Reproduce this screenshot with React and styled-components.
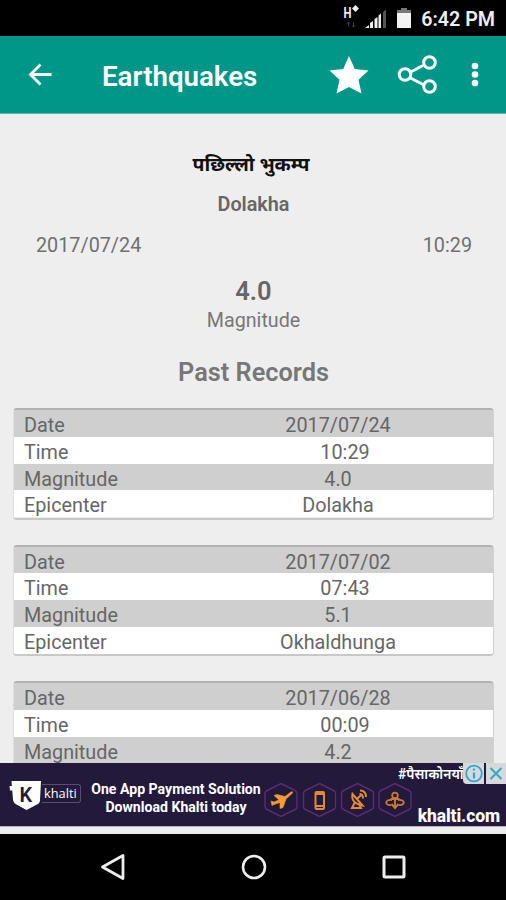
import React from "react";
import styled, { createGlobalStyle } from "styled-components";

const GlobalStyle = createGlobalStyle`
  * {
    box-sizing: border-box;
  }

  body {
    margin: 0;
    background: #000;
    font-family: Roboto, "Noto Sans", sans-serif;
  }
`;

const Screen = styled.div`
  width: 506px;
  height: 900px;
  display: flex;
  flex-direction: column;
  overflow: hidden;
  background: #eeeeee;
`;

const StatusBar = styled.div`
  flex: none;
  height: 36px;
  background: #000;
  color: #eee;
  display: flex;
  align-items: center;
  justify-content: flex-end;
  padding-right: 11px;
`;

const Network = styled.svg`
  width: 70px;
  height: 36px;
  margin-right: 9px;
`;

const Clock = styled.span`
  font-size: 19.7px;
  font-weight: 600;
  line-height: 36px;
  padding-top: 3px;
  white-space: nowrap;
`;

const AppBar = styled.header`
  flex: none;
  height: 78px;
  background: #009688;
  border-bottom: 1px solid #66b5ad;
  color: #fff;
  display: flex;
  align-items: center;
  padding: 1px 27px 0 28px;
`;

const AppTitle = styled.h1`
  flex: 1;
  margin: 0 0 0 50px;
  font-size: 27.7px;
  font-weight: 600;
  line-height: 32px;
  padding-top: 3px;
`;

const BarIcon = styled.svg`
  flex: none;
  width: ${(props) => props.$w}px;
  height: ${(props) => props.$h}px;
  margin-left: ${(props) => props.$gap || 0}px;
`;

const Content = styled.main`
  flex: 1;
  min-height: 0;
  overflow: hidden;
  display: flex;
  flex-direction: column;
  padding: 37px 12px 0 13px;
  color: #666;
  text-align: center;
`;

const LatestTitle = styled.h2`
  margin: 0;
  padding-right: 5px;
  font-size: 19.5px;
  font-weight: 700;
  line-height: 28px;
  color: #111;
`;

const LatestPlace = styled.div`
  margin-top: 14px;
  font-size: 19.8px;
  font-weight: 600;
  line-height: 24px;
`;

const LatestWhen = styled.div`
  display: flex;
  justify-content: space-between;
  margin-top: 17px;
  padding: 0 22px 0 23px;
  font-size: 19.8px;
  line-height: 24px;
  color: #707070;
`;

const LatestMagnitude = styled.div`
  margin-top: 18px;
  font-size: 25.5px;
  font-weight: 600;
  line-height: 30px;
`;

const MagnitudeLabel = styled.div`
  margin-top: 3px;
  font-size: 19.7px;
  line-height: 24px;
  color: #777;
`;

const SectionTitle = styled.h2`
  margin: 25px 0 20px;
  font-size: 25.3px;
  font-weight: 600;
  line-height: 30px;
  color: #777;
`;

const RecordCard = styled.section`
  flex: none;
  height: 111.5px;
  margin-bottom: 25px;
  border-top: 2px solid #b2b2b2;
  border-bottom: 2px solid #c8c8c8;
  border-left: 1px solid #dedede;
  border-right: 1px solid #d2d2d2;
  border-radius: 4px;
  overflow: hidden;
`;

const RecordRow = styled.div`
  display: grid;
  grid-template-columns: 160px 1fr;
  height: 26.8px;
  line-height: 31px;
  padding: 0 1px 0 10px;
  font-size: 19.8px;
  text-align: left;
  background: ${(props) => (props.$shaded ? "#cfcfcf" : "#fff")};
`;

const RecordValue = styled.span`
  text-align: center;
  padding-left: ${(props) => props.$indent || 0}px;
`;

const AdBanner = styled.div`
  flex: none;
  position: relative;
  height: 63px;
  background: #23193b;
  color: #fff;
  display: flex;
  align-items: flex-start;
  padding-left: 9px;
`;

const Brand = styled.div`
  display: flex;
  align-items: flex-start;
  padding-top: 17px;
  width: 73px;
`;

const Shield = styled.svg`
  flex: none;
  width: 33px;
  height: 31px;
`;

const BrandName = styled.span`
  flex: none;
  margin-top: 4px;
  width: 39px;
  height: 19px;
  padding-left: 2px;
  border: 1px solid #58506b;
  border-left: 0;
  border-radius: 0 3px 3px 0;
  font-family: "Open Sans", sans-serif;
  font-size: 12.8px;
  line-height: 16px;
`;

const Pitch = styled.div`
  width: 187px;
  padding: 17px 0 0 1px;
  text-align: center;
  font-size: 14.1px;
  font-weight: 700;
  line-height: 18px;
  white-space: nowrap;
`;

const Services = styled.svg`
  flex: none;
  width: 150px;
  height: 63px;
  margin-left: -7px;
`;

const Site = styled.span`
  margin: 41px 6px 0 auto;
  font-size: 17.5px;
  font-weight: 800;
  line-height: 25px;
  letter-spacing: -0.1px;
`;

const HashTag = styled.span`
  position: absolute;
  top: 1px;
  left: 398px;
  font-size: 13.8px;
  font-weight: 600;
  line-height: 20px;
  white-space: nowrap;
`;

const AdControls = styled.svg`
  position: absolute;
  top: 0;
  right: 0;
  width: 43px;
  height: 21px;
`;

const AdGap = styled.div`
  flex: none;
  height: 8px;
  background: #eee;
  border-top: 1px solid #b5b2bb;
`;

const NavBar = styled.nav`
  flex: none;
  height: 66px;
  background: #000;
  display: flex;
  align-items: center;
  justify-content: space-between;
  padding: 0 98px 0 99px;
`;

const records = [
  { date: "2017/07/24", time: "10:29", magnitude: "4.0", epicenter: "Dolakha" },
  { date: "2017/07/02", time: "07:43", magnitude: "5.1", epicenter: "Okhaldhunga" },
  { date: "2017/06/28", time: "00:09", magnitude: "4.2" },
];

const Record = ({ record }) => {
  const rows = [
    ["Date", record.date],
    ["Time", record.time],
    ["Magnitude", record.magnitude],
  ];
  if (record.epicenter) {
    rows.push(["Epicenter", record.epicenter]);
  }

  return (
    <RecordCard>
      {rows.map(([label, value], index) => (
        <RecordRow key={label} $shaded={index % 2 === 0}>
          <span>{label}</span>
          <RecordValue $indent={label === "Time" ? 14 : 0}>{value}</RecordValue>
        </RecordRow>
      ))}
    </RecordCard>
  );
};

const StatusIcons = () => (
  <Network viewBox="343 0 70 36">
    <text x="344.500" y="18" fontSize="14" fontWeight="700" fill="#eee" textLength="8" lengthAdjust="spacingAndGlyphs">H</text>
    <path d="M356.500 5l3.500 3.500-3.500 3.500-3.500-3.500z" fill="#eee" />
    <path d="M349.500 22v5M348 23.500l1.500-1.500 1.500 1.500M354.500 22v5M353 25.500l1.500 1.500 1.500-1.500" stroke="#444" fill="none" />
    <path d="M366 28l4-3v3zM371 23l3-2v7h-3zM375.500 19l3-2v11h-3zM379.500 15.500l2.500-2v14.500h-2.500z" fill="#eee" />
    <path d="M384 12l3-2.500v18.500h-3z" fill="#555" />
    <path d="M402 8h6v3h-6z" fill="#777" />
    <path d="M398 10h14v3h-14z" fill="#777" />
    <path d="M398 13h14v15h-14z" fill="#f2f2f2" />
  </Network>
);

const ServiceIcons = () => (
  <Services viewBox="262 763 150 63" fill="none">
    {[281, 319.5, 357.5, 395].map((x) => (
      <path
        key={x}
        d={`M${x} 783.500l14 7q2 1 2 3v13q0 2-2 3l-14 7-14-7q-2-1-2-3v-13q0-2 2-3z`}
        stroke="#5c2b78"
        strokeWidth="1.4"
      />
    ))}
    <path d="M271 801l3 1 5-2-5-4.500 3-1 8 2 6-4.500q2-1 1.500 1l-6.500 6-3 8.500-3 1v-6l-6 2-2 1z" fill="#f59a35" stroke="#f59a35" strokeWidth=".6" />
    <rect x="315.500" y="792" width="8.500" height="17" rx="1" stroke="#e08b38" strokeWidth="2" />
    <path d="M316 794h7.500M316 806h7.500" stroke="#e08b38" strokeWidth="2" />
    <path d="M352.500 794q-2 9 10 11.500zM355 802l-3 6h9l-2-4M357 799l4-4M359.500 794q3.500 0 3.500 4.500M360 790.500q6 0 6 6.500" stroke="#e08b38" strokeWidth="2" />
    <path d="M395 797v11M391.500 804l3.500 4 3.500-4M392 800c-8-1-7 6-1 5M398 800c8-1 7 6 1 5M390.500 799h9" stroke="#c7793a" strokeWidth="1.900" />
    <circle cx="395" cy="795.500" r="2.800" stroke="#c7793a" strokeWidth="1.800" />
  </Services>
);

const App = () => {
  return (
    <>
      <GlobalStyle />
      <Screen>
        <StatusBar>
          <StatusIcons />
          <Clock>6:42 PM</Clock>
        </StatusBar>

        <AppBar>
          <BarIcon $w={24} $h={24} viewBox="0 0 24 24" fill="none" stroke="#fff" strokeWidth="2.8">
            <path d="M12.500 1.500L2.500 11.500 12.500 21.500M2.500 11.500H23.500" />
          </BarIcon>
          <AppTitle>Earthquakes</AppTitle>
          <BarIcon $w={40} $h={38} viewBox="0 0 40 38" fill="#fff">
            <path d="M20 0l5.800 13L39.500 14.500 29.500 23.700 32.500 37.500 20 31 7.500 37.500 10.500 23.700.500 14.500 14.200 13z" />
          </BarIcon>
          <BarIcon $w={40} $h={40} $gap={28} viewBox="0 0 40 40" fill="none" stroke="#fff" strokeWidth="3">
            <path d="M13.500 17l12.500-6.500M13.500 23l12.500 6.500" />
            <circle cx="8" cy="19.500" r="5.800" />
            <circle cx="32.500" cy="7.500" r="5.800" />
            <circle cx="32.500" cy="31.500" r="5.800" />
          </BarIcon>
          <BarIcon $w={8} $h={26} $gap={34} viewBox="0 0 8 26" fill="#fff">
            <circle cx="4" cy="4" r="3.300" />
            <circle cx="4" cy="12.500" r="3.300" />
            <circle cx="4" cy="21" r="3.300" />
          </BarIcon>
        </AppBar>

        <Content>
          <LatestTitle>पछिल्लो भुकम्प</LatestTitle>
          <LatestPlace>Dolakha</LatestPlace>
          <LatestWhen>
            <span>2017/07/24</span>
            <span>10:29</span>
          </LatestWhen>
          <LatestMagnitude>4.0</LatestMagnitude>
          <MagnitudeLabel>Magnitude</MagnitudeLabel>
          <SectionTitle>Past Records</SectionTitle>
          {records.map((record) => (
            <Record key={record.date} record={record} />
          ))}
        </Content>

        <AdBanner>
          <Brand>
            <Shield viewBox="0 0 33 31">
              <path d="M2.500 1h29.500l-1 19q0 3-3 4.500l-10.500 5.500-10-5.500q-3-1.500-3.500-4.500z" fill="#fff" />
              <path d="M.500 6h3v4.500H1z" fill="#fff" />
              <text x="10.500" y="21.500" fontSize="20" fontWeight="600" fill="#23193b">K</text>
            </Shield>
            <BrandName>khalti</BrandName>
          </Brand>
          <Pitch>
            One App Payment Solution
            <br />
            Download Khalti today
          </Pitch>
          <ServiceIcons />
          <Site>khalti.com</Site>
          <HashTag>#पैसाकोनयाँ</HashTag>
          <AdControls viewBox="0 0 43 21" fill="none">
            <path d="M0 0h21v21H4q-4 0-4-4zM23 0h20v21H23z" fill="#d8d8dc" />
            <circle cx="11" cy="10.500" r="7.800" stroke="#2ba9cc" strokeWidth="1.800" />
            <path d="M11 5.500v2M11 9.500v6" stroke="#2ba9cc" strokeWidth="2.200" />
            <path d="M27.500 5l11 11M38.500 5l-11 11" stroke="#2ba9cc" strokeWidth="2" />
          </AdControls>
        </AdBanner>
        <AdGap />

        <NavBar>
          <BarIcon $w={28} $h={28} viewBox="0 0 28 28" fill="none" stroke="#eee" strokeWidth="2.8">
            <path d="M24 2.500v23L3.500 14z" strokeLinejoin="round" />
          </BarIcon>
          <BarIcon $w={28} $h={28} viewBox="0 0 28 28" fill="none" stroke="#eee" strokeWidth="2.6">
            <circle cx="14" cy="14" r="11" />
          </BarIcon>
          <BarIcon $w={28} $h={28} viewBox="0 0 28 28" fill="none" stroke="#eee" strokeWidth="3">
            <rect x="4" y="4" width="20" height="20" rx="1" />
          </BarIcon>
        </NavBar>
      </Screen>
    </>
  );
};

export default App;
